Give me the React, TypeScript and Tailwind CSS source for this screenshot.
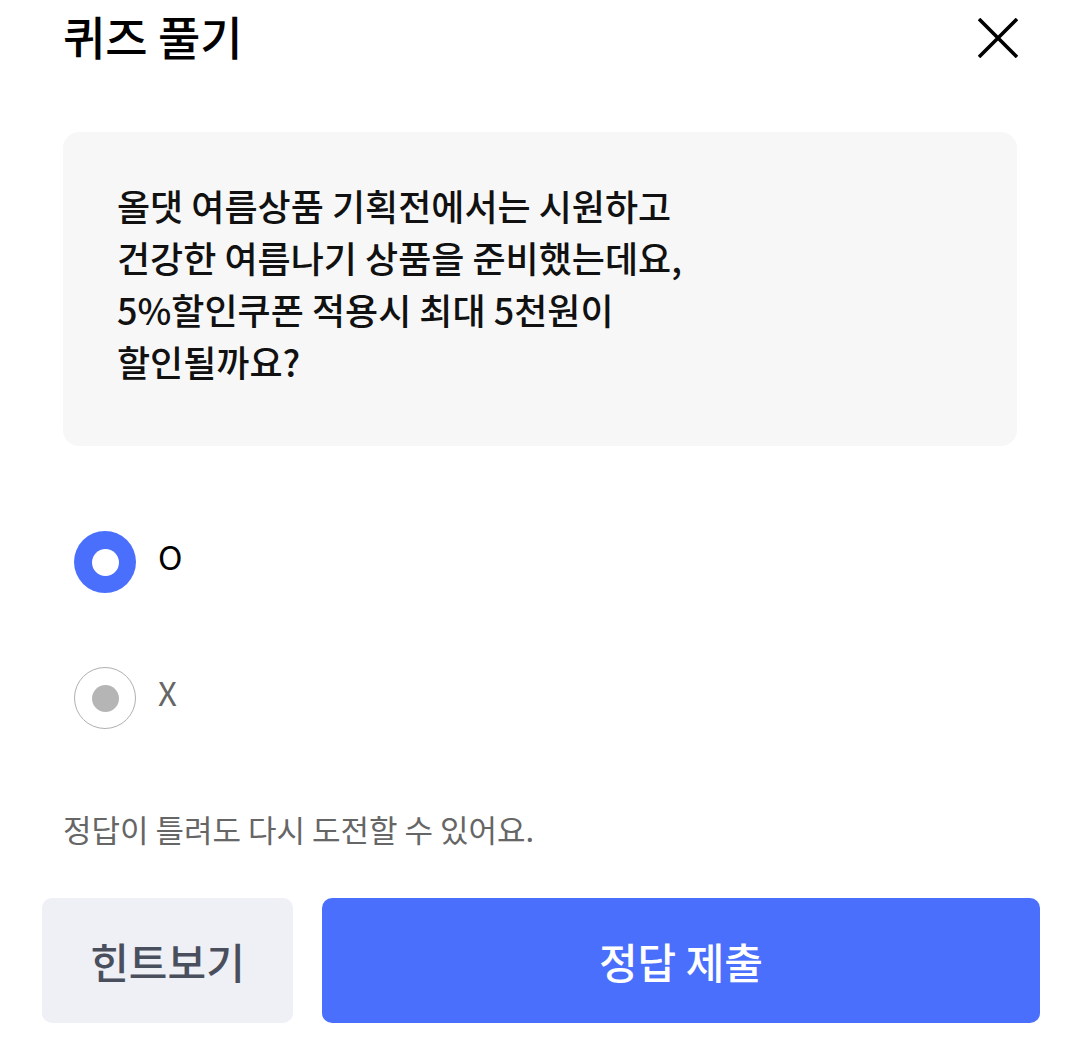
const options = [
  { id: "o", label: "O", checked: true },
  { id: "x", label: "X", checked: false },
];

export default function App() {
  return (
    <div className="w-[1080px] h-[1037px] bg-white flex flex-col font-['Noto_Sans_CJK_KR','Noto_Sans',sans-serif]">
      <header className="h-[70px] flex items-center justify-between pl-[63px] pr-[62px]">
        <h1 className="text-[46px] font-medium text-black leading-none">퀴즈 풀기</h1>
        <button className="w-[40px] h-[40px] flex items-center justify-center mt-[6px]">
          <svg width="40" height="40" viewBox="0 0 40 40" fill="none">
            <path d="M1 1 L39 39 M39 1 L1 39" stroke="#000" strokeWidth="3.6" />
          </svg>
        </button>
      </header>

      <div className="mx-[63px] mt-[62px] h-[314px] rounded-2xl bg-[#f7f7f7] pl-[54px] pt-[47px]">
        <p className="text-[36px] leading-[52px] font-medium text-[#111]">
          올댓 여름상품 기획전에서는 시원하고
          <br />
          건강한 여름나기 상품을 준비했는데요,
          <br />
          5%할인쿠폰 적용시 최대 5천원이
          <br />
          할인될까요?
        </p>
      </div>

      <div className="mt-[85px] pl-[74px] flex flex-col gap-[74px]">
        {options.map((opt) => (
          <label key={opt.id} className="flex items-center gap-[22px]">
            {opt.checked ? (
              <span className="w-[62px] h-[62px] rounded-full bg-[#4a6ffc] flex items-center justify-center">
                <span className="w-[27px] h-[27px] rounded-full bg-white" />
              </span>
            ) : (
              <span className="w-[62px] h-[62px] rounded-full border-[1.5px] border-[#b0b0b0] flex items-center justify-center">
                <span className="w-[27px] h-[27px] rounded-full bg-[#b5b5b5]" />
              </span>
            )}
            <span
              className={
                opt.checked
                  ? "text-[33px] text-black -mt-[10px]"
                  : "text-[33px] text-[#666] -mt-[10px]"
              }
            >
              {opt.label}
            </span>
          </label>
        ))}
      </div>

      <p className="mt-[77px] pl-[63px] text-[31px] text-[#666]">
        정답이 틀려도 다시 도전할 수 있어요.
      </p>

      <div className="mt-[45px] pl-[42px] pr-[40px] flex gap-[29px]">
        <button className="w-[251px] h-[125px] rounded-[10px] bg-[#eff0f5] text-[42px] font-medium text-[#4a4f5e]">
          힌트보기
        </button>
        <button className="flex-1 h-[125px] rounded-[10px] bg-[#4a6ffc] text-[42px] font-medium text-white">
          정답 제출
        </button>
      </div>
    </div>
  );
}
